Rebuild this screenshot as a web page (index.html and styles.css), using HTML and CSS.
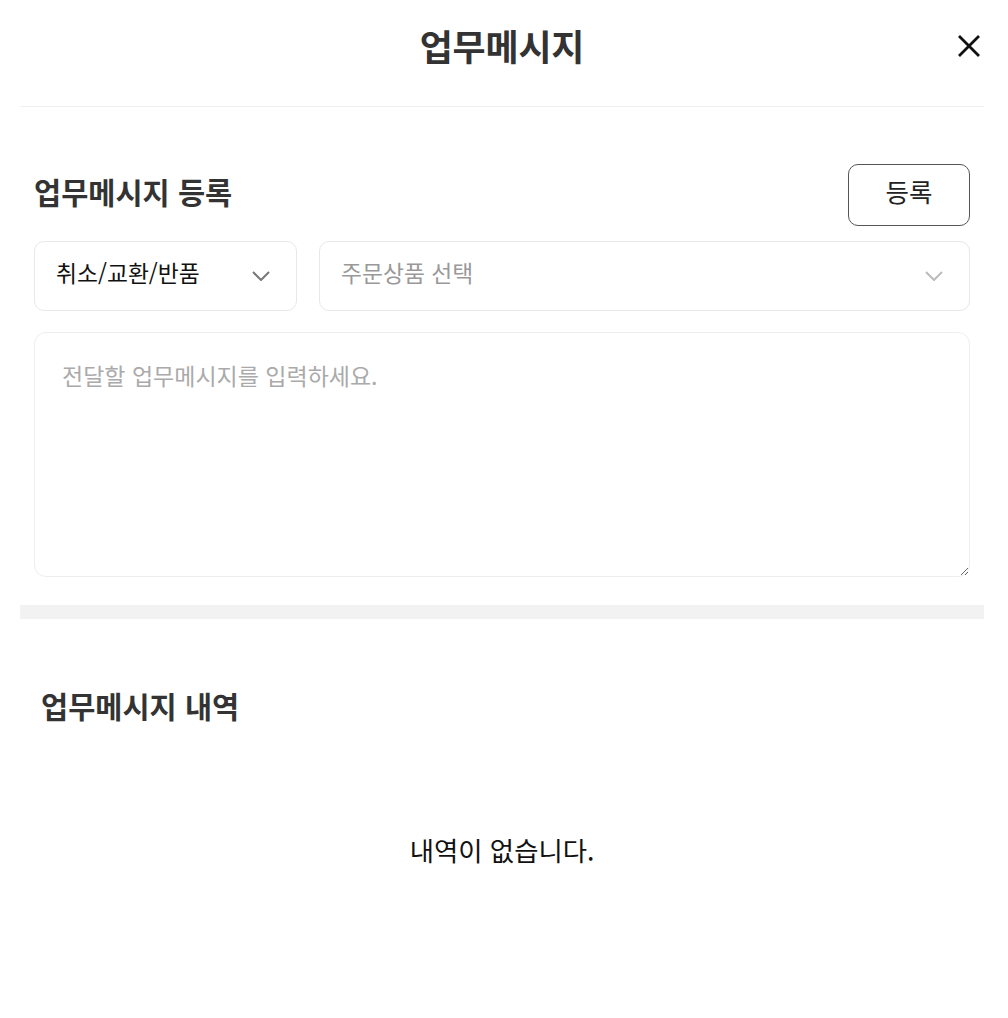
FILE: index.html
```html
<!DOCTYPE html>
<html lang="ko">
<head>
<meta charset="utf-8">
<title>업무메시지</title>
<link rel="stylesheet" href="styles.css">
</head>
<body>
<div class="page">
  <header class="header">
    <h1 class="header-title">업무메시지</h1>
    <button class="close" type="button" aria-label="닫기">
      <svg width="24" height="24" viewBox="0 0 24 24"><path d="M2 2L22 22M22 2L2 22" stroke="#111" stroke-width="2.8" fill="none"/></svg>
    </button>
  </header>

  <section class="register">
    <div class="title-row">
      <h2 class="section-title">업무메시지 등록</h2>
      <button class="btn-register" type="button">등록</button>
    </div>
    <div class="select-row">
      <div class="select select-type">
        <span class="select-text">취소/교환/반품</span>
        <svg class="chev" width="18" height="10" viewBox="0 0 18 10"><path d="M1 1L9 9L17 1" stroke="#777" stroke-width="2" fill="none"/></svg>
      </div>
      <div class="select select-product">
        <span class="select-text placeholder">주문상품 선택</span>
        <svg class="chev" width="18" height="10" viewBox="0 0 18 10"><path d="M1 1L9 9L17 1" stroke="#bbb" stroke-width="2" fill="none"/></svg>
      </div>
    </div>
    <textarea class="message" placeholder="전달할 업무메시지를 입력하세요."></textarea>
  </section>

  <div class="band"></div>

  <section class="history">
    <h2 class="section-title">업무메시지 내역</h2>
    <p class="empty">내역이 없습니다.</p>
  </section>
</div>
</body>
</html>
```

FILE: styles.css
```css
* { box-sizing: border-box; }
html, body { margin: 0; padding: 0; background: #fff; }
body {
  font-family: "Noto Sans CJK KR", "Noto Sans", sans-serif;
  color: #111;
}
.page { width: 1008px; padding: 0 24px 0 20px; }
.header {
  position: relative;
  height: 107px;
  padding-bottom: 16px;
  border-bottom: 1px solid #f0f0f0;
  display: flex;
  align-items: center;
  justify-content: center;
}
.header-title {
  margin: 0;
  font-size: 36px;
  font-weight: 700;
  line-height: 44px;
  color: #333;
  letter-spacing: -0.2px;
}
.close {
  position: absolute;
  right: 3px;
  top: 34px;
  width: 24px;
  height: 24px;
  padding: 0;
  border: 0;
  background: none;
  display: flex;
}
.register { padding: 57px 14px 0; }
.title-row {
  display: flex;
  justify-content: space-between;
  align-items: center;
  height: 62px;
}
.section-title {
  margin: 0;
  font-size: 29.5px;
  font-weight: 700;
  line-height: 40px;
  color: #333;
}
.register .section-title { padding-bottom: 9px; }
.btn-register {
  width: 122px;
  height: 62px;
  border: 1px solid #555;
  border-radius: 10px;
  background: #fff;
  font-family: inherit;
  font-size: 25.5px;
  color: #222;
  padding: 0 0 10px;
}
.select-row {
  display: flex;
  gap: 22px;
  margin-top: 15px;
}
.select {
  height: 70px;
  border: 1px solid #e8e8e8;
  border-radius: 10px;
  display: flex;
  align-items: center;
  justify-content: space-between;
  padding: 0 26px 8px 21px;
}
.select .chev { margin-top: 8px; }
.select-type { width: 263px; }
.select-product { flex: 1; }
.select-text { font-size: 22.8px; color: #111; }
.select-text.placeholder { color: #999; }
.chev { display: block; }
.message {
  display: block;
  width: 100%;
  height: 245px;
  margin-top: 21px;
  border: 1px solid #eeeeee;
  border-radius: 12px;
  padding: 26px 27px;
  font-family: inherit;
  font-size: 23px;
  line-height: 32px;
  color: #111;
  outline: none;
}
.message::placeholder { color: #aaa; }
.band {
  height: 14px;
  margin-top: 28px;
  background: #f2f2f2;
}
.history { padding: 66px 21px 0; }
.empty {
  margin: 107px 0 0;
  text-align: center;
  font-size: 26.4px;
  line-height: 36px;
  color: #111;
}
```
